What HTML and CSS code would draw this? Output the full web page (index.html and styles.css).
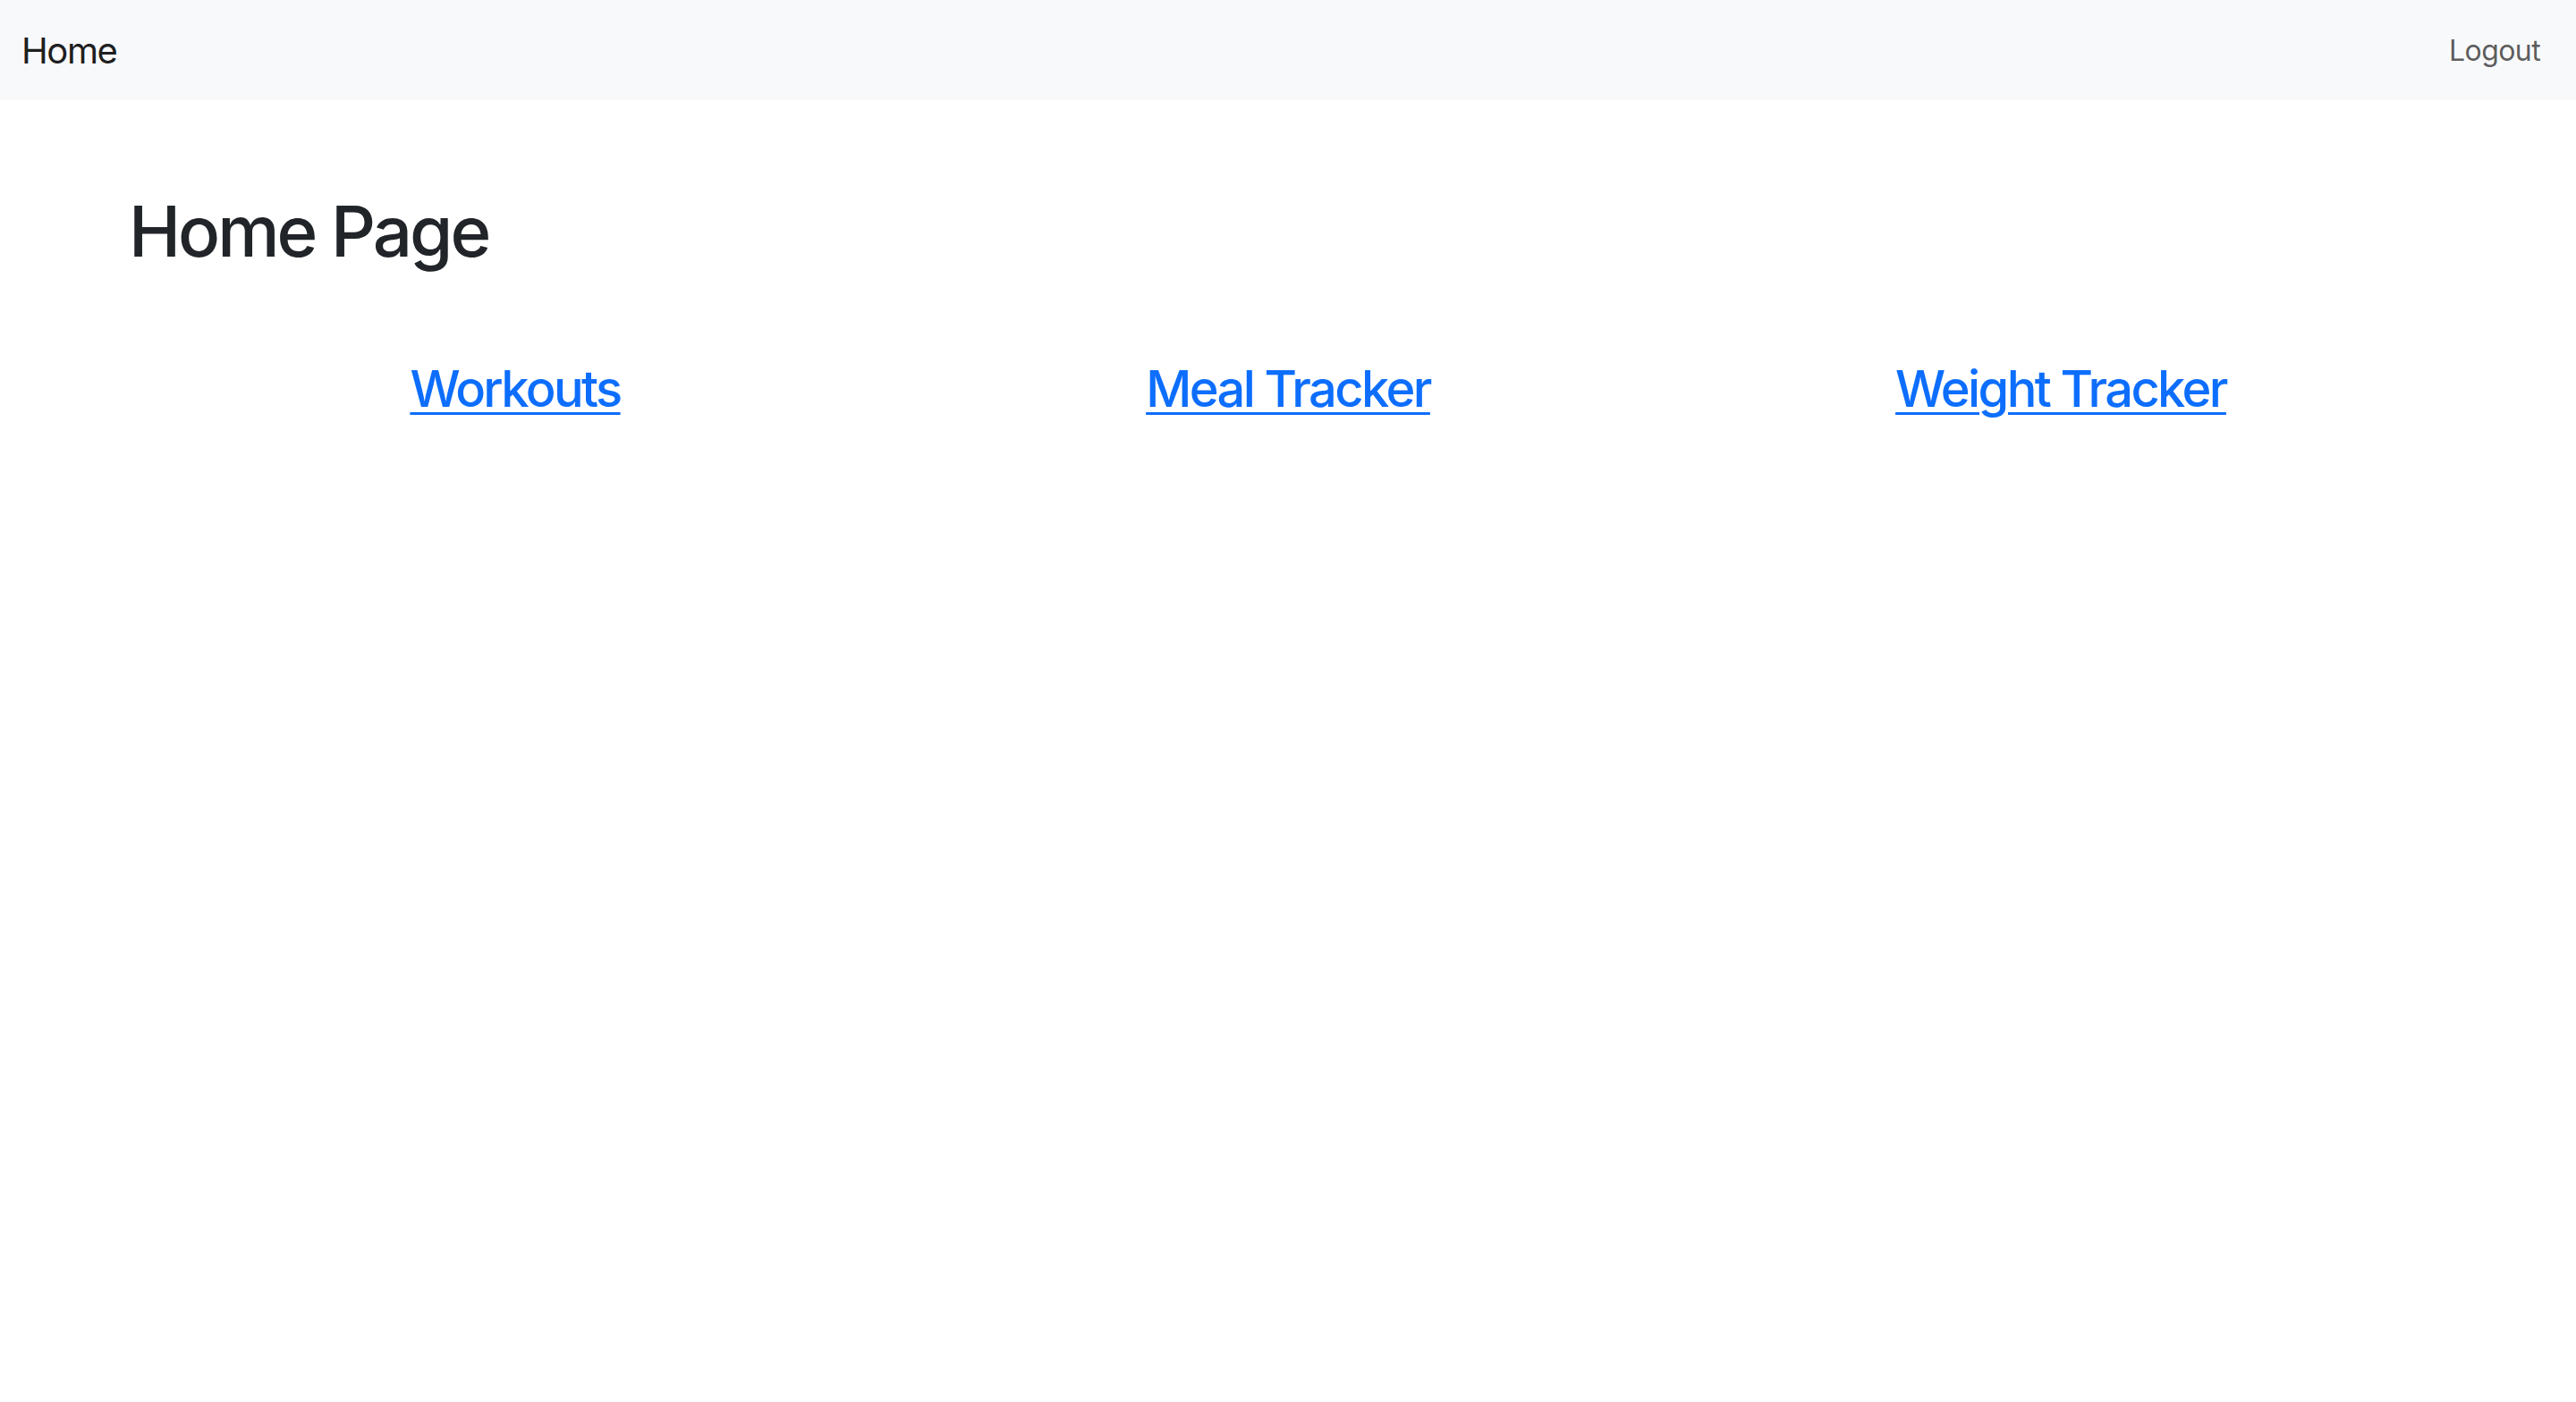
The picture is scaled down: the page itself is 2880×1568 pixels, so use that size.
FILE: index.html
```html
<!DOCTYPE html>
<html lang="en">
<head>
<meta charset="utf-8">
<title>Home</title>
<link rel="stylesheet" href="styles.css">
</head>
<body>
<nav class="navbar">
  <a class="brand" href="#">Home</a>
  <a class="nav-link" href="#">Logout</a>
</nav>
<main class="container">
  <h1 class="title">Home Page</h1>
  <div class="links">
    <div class="col"><a class="big-link" href="#">Workouts</a></div>
    <div class="col"><a class="big-link" href="#">Meal Tracker</a></div>
    <div class="col"><a class="big-link" href="#">Weight Tracker</a></div>
  </div>
</main>
</body>
</html>
```
FILE: styles.css
```css
html, body {
  margin: 0;
  padding: 0;
}
body {
  font-family: Inter, "Liberation Sans", sans-serif;
  color: #212529;
  background: #fff;
}
.navbar {
  display: flex;
  align-items: center;
  justify-content: space-between;
  height: 112px;
  box-sizing: border-box;
  padding: 0 24px;
  background: #f8f9fa;
}
.brand {
  font-size: 40px;
  color: rgba(0, 0, 0, 0.9);
  text-decoration: none;
  letter-spacing: -1.4px;
}
.nav-link {
  font-size: 32px;
  color: rgba(0, 0, 0, 0.65);
  text-decoration: none;
  padding-right: 16px;
  letter-spacing: -0.6px;
}
.container {
  width: 2592px;
  margin: 0 auto;
  padding-top: 99px;
}
.title {
  margin: 0;
  font-size: 78px;
  font-weight: 500;
  line-height: 96px;
  letter-spacing: -3px;
}
.links {
  display: grid;
  grid-template-columns: repeat(3, 1fr);
  margin-top: 95px;
}
.col {
  text-align: center;
}
.big-link {
  font-size: 56px;
  font-weight: 500;
  line-height: 67px;
  color: #0d6efd;
  text-decoration: underline;
  text-decoration-thickness: 3px;
  text-underline-offset: 6px;
  letter-spacing: -2.6px;
}
```
